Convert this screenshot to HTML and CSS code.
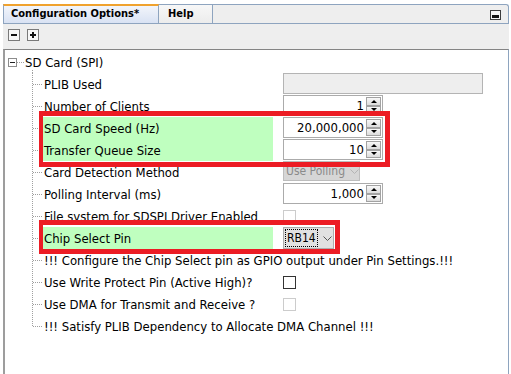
FILE: index.html
```html
<!DOCTYPE html>
<html>
<head>
<meta charset="utf-8">
<link rel="stylesheet" href="styles.css">
</head>
<body>
<div class="panel">
  <div class="tabbar">
    <div class="tab active">Configuration Options*</div>
    <div class="tab help">Help</div>
    <div class="tabfill">
      <svg class="minbtn" width="11" height="10" viewBox="0 0 11 10"><rect x="0.5" y="0.5" width="10" height="9" fill="#f4f4f4" stroke="#3c3c3c"/><rect x="2" y="5" width="7" height="3" fill="#111"/></svg>
    </div>
  </div>
  <div class="toolbar">
    <svg class="tbtn" width="12" height="12" viewBox="0 0 12 12"><rect x="0.5" y="0.5" width="11" height="11" fill="#f7f7f7" stroke="#7a7a7a"/><rect x="3" y="5" width="6" height="2" fill="#111"/></svg>
    <svg class="tbtn" width="12" height="12" viewBox="0 0 12 12"><rect x="0.5" y="0.5" width="11" height="11" fill="#f7f7f7" stroke="#7a7a7a"/><rect x="3" y="5" width="6" height="2" fill="#111"/><rect x="5" y="3" width="2" height="6" fill="#111"/></svg>
  </div>
  <div class="content">
    <div class="root">
      <svg class="exp" width="9" height="9" viewBox="0 0 9 9"><rect x="0.5" y="0.5" width="8" height="8" fill="#fff" stroke="#8c8c8c"/><rect x="2" y="4" width="5" height="1" fill="#222"/></svg>
      <span class="rootline"></span>
      <span class="rootlabel">SD Card (SPI)</span>
    </div>

    <div class="row">
      <span class="conn"></span><span class="label">PLIB Used</span>
      <span class="val"><span class="field disabled"></span></span>
    </div>
    <div class="row">
      <span class="conn"></span><span class="label">Number of Clients</span>
      <span class="val"><span class="spin"><span class="num">1</span><span class="btns"><span class="sb up"></span><span class="sb dn"></span></span></span></span>
    </div>
    <div class="row">
      <span class="conn"></span><span class="label green">SD Card Speed (Hz)</span>
      <span class="val"><span class="spin"><span class="num">20,000,000</span><span class="btns"><span class="sb up"></span><span class="sb dn"></span></span></span></span>
    </div>
    <div class="row">
      <span class="conn"></span><span class="label green">Transfer Queue Size</span>
      <span class="val"><span class="spin"><span class="num">10</span><span class="btns"><span class="sb up"></span><span class="sb dn"></span></span></span></span>
    </div>
    <div class="row">
      <span class="conn"></span><span class="label">Card Detection Method</span>
      <span class="val"><span class="combo off"><span class="ctext">Use Polling</span><svg class="chev" width="9" height="5" viewBox="0 0 9 5"><polyline points="0.5,0.5 4.5,4.5 8.5,0.5" fill="none" stroke="#b4b4b4"/></svg></span></span>
    </div>
    <div class="row">
      <span class="conn"></span><span class="label">Polling Interval (ms)</span>
      <span class="val"><span class="spin"><span class="num">1,000</span><span class="btns"><span class="sb up"></span><span class="sb dn"></span></span></span></span>
    </div>
    <div class="row">
      <span class="conn"></span><span class="label">File system for SDSPI Driver Enabled</span>
      <span class="val mid"><span class="check disabled"></span></span>
    </div>
    <div class="row">
      <span class="conn"></span><span class="label green">Chip Select Pin</span>
      <span class="val"><span class="combo on"><span class="ctext focus">RB14</span><svg class="chev" width="9" height="5" viewBox="0 0 9 5"><polyline points="0.5,0.5 4.5,4.5 8.5,0.5" fill="none" stroke="#555"/></svg></span></span>
    </div>
    <div class="row">
      <span class="conn"></span><span class="label wide">!!! Configure the Chip Select pin as GPIO output under Pin Settings.!!!</span>
    </div>
    <div class="row">
      <span class="conn"></span><span class="label">Use Write Protect Pin (Active High)?</span>
      <span class="val mid"><span class="check"></span></span>
    </div>
    <div class="row">
      <span class="conn"></span><span class="label">Use DMA for Transmit and Receive ?</span>
      <span class="val mid"><span class="check disabled"></span></span>
    </div>
    <div class="row last">
      <span class="conn"></span><span class="label wide">!!! Satisfy PLIB Dependency to Allocate DMA Channel !!!</span>
    </div>

    <div class="mark mark1"></div>
    <div class="mark mark2"></div>
  </div>
</div>
</body>
</html>
```

FILE: styles.css
```css
html, body {
  margin: 0;
  padding: 0;
  background: #ffffff;
}
body {
  width: 511px;
  height: 374px;
  overflow: hidden;
  font-family: "DejaVu Sans Condensed", "DejaVu Sans", sans-serif;
  font-size: 13px;
  color: #000;
}
.panel {
  margin: 4px 0 0 3px;
  width: 506px;
  height: 370px;
  display: flex;
  flex-direction: column;
}

/* tabs */
.tabbar {
  display: flex;
  height: 20px;
  box-sizing: border-box;
  border-bottom: 1px solid #8ea4bf;
}
.tab {
  box-sizing: border-box;
  height: 19px;
  font-weight: bold;
  font-size: 11px;
  line-height: 16px;
  white-space: nowrap;
}
.tab.active {
  width: 156px;
  border-top: 2px solid #f0a22e;
  border-left: 1px solid #8ea4bf;
  border-right: 1px solid #8ea4bf;
  background: linear-gradient(#f2f5fb, #d9e2f3);
  padding-left: 7px;
  line-height: 16px;
}
.tab.help {
  width: 54px;
  border-top: 1px solid #8ea4bf;
  border-right: 1px solid #8ea4bf;
  background: linear-gradient(#f7f7f7, #ececec);
  padding-left: 9px;
  line-height: 18px;
}
.tabfill {
  flex: 1;
  box-sizing: border-box;
  height: 19px;
  border-top: 1px solid #8ea4bf;
  border-right: 1px solid #8ea4bf;
  border-top-right-radius: 3px;
  background: #eeeeee;
  display: flex;
  justify-content: flex-end;
  align-items: flex-start;
  padding: 5px 7px 0 0;
}
.minbtn { display: block; }

/* toolbar */
.toolbar {
  height: 25px;
  box-sizing: border-box;
  background: #eeeeee;
  padding: 5px 0 0 5px;
  display: flex;
  gap: 7px;
  align-items: flex-start;
}
.tbtn { display: block; }

/* content */
.content {
  position: relative;
  flex: 1;
  background: #fff;
  border-top: 1px solid #848484;
  border-left: 2px solid #9d9d9d;
  border-right: 1px solid #8ea4bf;
  padding-top: 1px;
}
.root {
  height: 22px;
  display: flex;
  align-items: center;
  padding-left: 3px;
  background-image: repeating-linear-gradient(to bottom, #a0a0a0 0 1px, transparent 1px 2px);
  background-size: 1px 3px;
  background-position: 27px 19px;
  background-repeat: no-repeat;
}
.exp { display: block; }
.rootline {
  width: 7px;
  height: 1px;
  margin: 0 1px 0 0;
  background-image: repeating-linear-gradient(to right, #a0a0a0 0 1px, transparent 1px 2px);
}
.rootlabel { white-space: nowrap; }

.row {
  height: 22px;
  display: flex;
  align-items: stretch;
}
.conn {
  width: 38px;
  flex: none;
  background-image:
    repeating-linear-gradient(to bottom, #a0a0a0 0 1px, transparent 1px 2px),
    repeating-linear-gradient(to right, #a0a0a0 0 1px, transparent 1px 2px);
  background-size: 1px 100%, 10px 1px;
  background-position: 27px 0, 28px 11px;
  background-repeat: no-repeat;
}
.row.last .conn {
  background-size: 1px 11px, 10px 1px;
}
.label {
  width: 230px;
  flex: none;
  box-sizing: border-box;
  padding-left: 1px;
  display: flex;
  align-items: center;
  white-space: nowrap;
  overflow: visible;
}
.label.green { background: #bfffbf; }
.label.wide { width: auto; }
.val {
  margin-left: 10px;
  display: flex;
  align-items: flex-start;
}
.val.mid { align-items: center; }

.field {
  display: block;
  box-sizing: border-box;
  width: 200px;
  height: 21px;
  border: 1px solid #b4b4b4;
}
.field.disabled { background: #eeeeee; }

.spin {
  display: flex;
  box-sizing: border-box;
  width: 100px;
  height: 21px;
  border: 1px solid #ababab;
  background: #fff;
}
.num {
  flex: 1;
  text-align: right;
  padding-right: 2px;
  line-height: 19px;
  color: #000;
}
.btns {
  width: 16px;
  box-sizing: border-box;
  padding: 1px 1px 1px 0;
  display: flex;
  flex-direction: column;
}
.sb {
  flex: 1;
  box-sizing: border-box;
  border: 1px solid #a2a2a2;
  background: linear-gradient(#f8f8f8, #dcdcdc);
  display: flex;
  align-items: center;
  justify-content: center;
}
.sb::after {
  content: "";
  display: block;
  width: 0;
  height: 0;
  border-left: 3px solid transparent;
  border-right: 3px solid transparent;
}
.sb.up::after { border-bottom: 3px solid #000; }
.sb.dn::after { border-top: 3px solid #000; }

.combo {
  display: flex;
  align-items: center;
  box-sizing: border-box;
  border: 1px solid #bdbdbd;
  font-size: 12px;
  overflow: hidden;
}
.combo.off {
  width: 77px;
  height: 20px;
  background: #d6d6d6;
  color: #8a8a8a;
  padding-left: 2px;
}
.combo.off .chev { margin-left: 5px; }
.combo.on {
  width: 51px;
  height: 22px;
  background: #e1e1e1;
  border-color: #adadad;
  padding-left: 2px;
}
.ctext { white-space: nowrap; }
.ctext.focus {
  outline: 1px dotted #000;
  outline-offset: 0;
  padding: 1px 1px;
  line-height: 14px;
}
.combo.on .chev { margin-left: 6px; }
.chev { display: block; flex: none; }

.check {
  display: block;
  box-sizing: border-box;
  width: 13px;
  height: 13px;
  border: 1px solid #333;
  background: #fff;
}
.check.disabled { border-color: #cccccc; }

/* red annotation boxes drawn over the tree */
.mark {
  position: absolute;
  box-sizing: border-box;
  border: 5px solid #ec1c24;
  border-left-width: 4px;
}
.mark1 { left: 34px; top: 61px; width: 351px; height: 56px; }
.mark2 { left: 34px; top: 170px; width: 301px; height: 34px; }
```
